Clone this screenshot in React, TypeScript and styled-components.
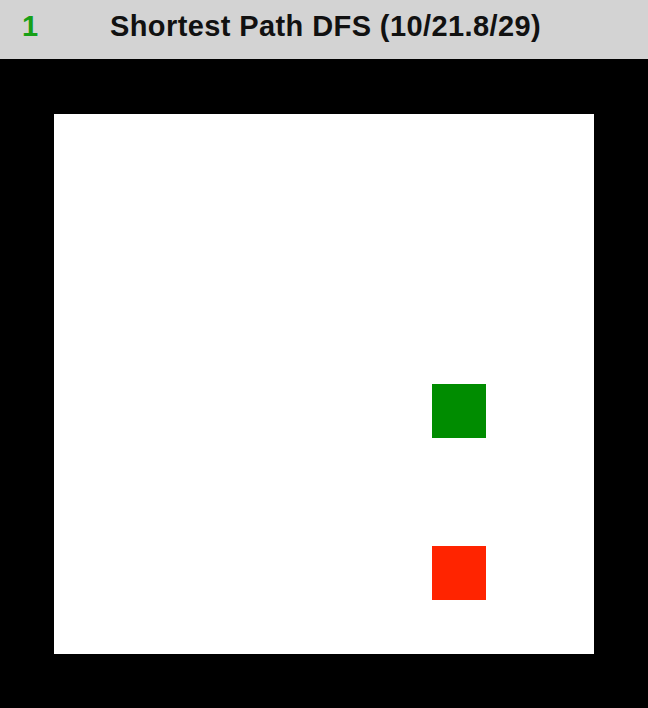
import React from 'react';
import styled, { createGlobalStyle } from 'styled-components';

const GlobalStyle = createGlobalStyle`
  html, body {
    margin: 0;
    padding: 0;
    background: #000;
  }
`;

const SIZE = 10;
const start = { row: 5, col: 7 };
const goal = { row: 8, col: 7 };

type CellKind = 'empty' | 'start' | 'goal';

const cellColors: Record<CellKind, string> = {
  empty: '#ffffff',
  start: '#008c00',
  goal: '#ff2400',
};

export default function App() {
  const cells: CellKind[] = [];
  for (let r = 0; r < SIZE; r++) {
    for (let c = 0; c < SIZE; c++) {
      if (r === start.row && c === start.col) cells.push('start');
      else if (r === goal.row && c === goal.col) cells.push('goal');
      else cells.push('empty');
    }
  }

  return (
    <>
      <GlobalStyle />
      <StyledPage>
        <StyledHeader>
          <StyledIndex>1</StyledIndex>
          <StyledTitle>Shortest Path DFS (10/21.8/29)</StyledTitle>
        </StyledHeader>
        <StyledStage>
          <StyledBoard>
            {cells.map((kind, i) => (
              <StyledCell key={i} $kind={kind} />
            ))}
          </StyledBoard>
        </StyledStage>
      </StyledPage>
    </>
  );
}

const StyledPage = styled.div`
  width: 648px;
  height: 708px;
  display: flex;
  flex-direction: column;
  background: #000;
  font-family: 'Liberation Sans', Arial, sans-serif;
`;

const StyledHeader = styled.header`
  height: 59px;
  box-sizing: border-box;
  flex: none;
  display: flex;
  align-items: center;
  background: #d3d3d3;
  padding: 0 0 6px 22px;
`;

const StyledIndex = styled.span`
  color: #17a017;
  font-size: 29px;
  font-weight: 700;
  width: 88px;
  line-height: 1;
`;

const StyledTitle = styled.h1`
  margin: 0;
  font-size: 29px;
  font-weight: 700;
  letter-spacing: 0.4px;
  line-height: 1;
  color: #111;
`;

const StyledStage = styled.main`
  flex: 1;
  display: flex;
  padding: 55px 54px 54px;
`;

const StyledBoard = styled.div`
  display: grid;
  grid-template-columns: repeat(${SIZE}, 54px);
  grid-template-rows: repeat(${SIZE}, 54px);
  background: #fff;
`;

const StyledCell = styled.div<{ $kind: CellKind }>`
  background: ${(p) => cellColors[p.$kind]};
`;
